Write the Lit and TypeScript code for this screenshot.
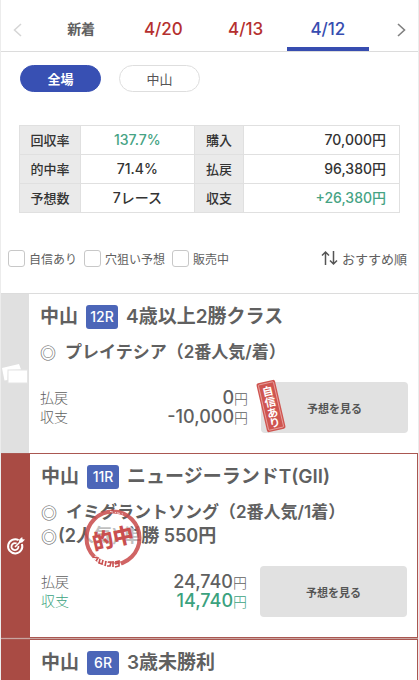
import { LitElement, html, css, svg, nothing } from "lit";
import { customElement, property, state } from "lit/decorators.js";
import { classMap } from "lit/directives/class-map.js";

interface Race {
  place: string;
  no: string;
  name: string;
  picks: string[];
  payout?: string;
  balance?: string;
  confident?: boolean;
  hit?: boolean;
}

const races: Race[] = [
  {
    place: "中山", no: "12R", name: "4歳以上2勝クラス",
    picks: ["プレイテシア（2番人気/着）"],
    payout: "0", balance: "-10,000", confident: true,
  },
  {
    place: "中山", no: "11R", name: "ニュージーランドT(GII)",
    picks: ["イミグラントソング（2番人気/1着）", "(2人気) 単勝 550円"],
    payout: "24,740", balance: "14,740", hit: true,
  },
  { place: "中山", no: "6R", name: "3歳未勝利", picks: [], hit: true },
];

const ticketsIcon = svg`
  <svg width="28" height="22" viewBox="0 0 28 22" aria-hidden="true">
    <path d="M1 5 L18 1 L20 6.5 L7 7 L6.5 17 L3.5 17.5 Z" fill="#fff"/>
    <rect x="7" y="7" width="19.500" height="13" fill="#fff" stroke="#e4e4e4" stroke-width="1"/>
  </svg>`;

const targetIcon = svg`
  <svg width="20" height="20" viewBox="0 0 20 20" fill="none" stroke="#fff" aria-hidden="true">
    <path d="M12.6 4.1 A7.1 7.1 0 1 0 15.9 8" stroke-width="2"/>
    <path d="M10.6 7.5 A3.5 3.5 0 1 0 12.4 10" stroke-width="1.8"/>
    <path d="M9 11 L15 5" stroke-width="1.6"/>
    <path d="M13 5.8 L13.2 3.6 L16.2 1 L16.6 3.2 L19 3.6 L16.2 6.6 L14 6.8 Z" fill="#fff" stroke="none"/>
  </svg>`;

const confidentStamp = svg`
  <svg class="confident" width="32" height="54" viewBox="0 0 32 54" role="img" aria-label="自信あり">
    <g transform="rotate(-13 16 27)">
      <rect x="6.500" y="2" width="19" height="50" rx="2" fill="#cf5550"/>
      <rect x="8.300" y="3.800" width="15.400" height="46.400" rx="1" fill="none" stroke="#eeb5b2" stroke-width=".7"/>
      <g class="vertical">
        <text x="16" y="16">自</text><text x="16" y="27">信</text>
        <text x="16" y="38">あ</text><text x="16" y="48">り</text>
      </g>
    </g>
  </svg>`;

const hitStamp = svg`
  <svg class="hit-stamp" width="60" height="60" viewBox="0 0 60 60" role="img" aria-label="的中">
    <ellipse cx="30" cy="30" rx="25" ry="16" fill="#fff" opacity=".6"/>
    <circle cx="30" cy="30" r="26.5" fill="none" stroke="#c94f4f" stroke-width="4" opacity=".88"/>
    <path d="M11 49 Q27 61 38 56" fill="none" stroke="#fff" stroke-width="4"/>
    <path d="M27 3.500 L40 6" fill="none" stroke="#fff" stroke-width=".8" stroke-dasharray="3 2 1 1"/>
    <path d="M10 49 l5 1 l-2 3 m4 -2 l-1 4 l3 1 l1 -4 m3 1 l-1 5 m3 -4 l3 0 l-1 4 l-3 0 m6 -5 l0 6 m2 -5 l4 -1 l0 5 l-4 1 m0 -3 l4 -1" fill="none" stroke="#c94f4f" stroke-width="1.600"/>
    <text class="brush" x="30" y="38" transform="rotate(-13 30 30)">的中</text>
  </svg>`;

@customElement("race-card")
class RaceCard extends LitElement {
  @property({ attribute: false }) race!: Race;

  static styles = css`
    :host { display: block; }
    * { box-sizing: border-box; }
    .card {
      display: grid;
      grid-template-columns: 28px 1fr;
      height: 100%;
      border-top: 1px solid #dcdcdc;
      color: #606060;
    }
    .card.hit { border: 1px solid #aa5751; border-left: 0; grid-template-columns: 29px 1fr; }
    .side { display: flex; align-items: center; justify-content: center; background: #e0e0e0; }
    .hit .side { background: #a94b44; }
    .body { padding: 9px 10px 20px 11px; min-width: 0; }
    h2 {
      display: flex; align-items: center; gap: 8px;
      margin: 0; height: 28px;
      font-size: 19px; font-weight: 600; line-height: 28px; white-space: nowrap;
    }
    .no {
      width: 32px; height: 24px; border-radius: 3px;
      background: #4c66b8; color: #fff;
      font-size: 14px; font-weight: 500; line-height: 24px; text-align: center;
    }
    .picks { position: relative; list-style: none; margin: 9px 0 18px; padding: 0; }
    .picks li { display: flex; font-size: 17px; font-weight: 600; line-height: 24px; white-space: nowrap; }
    .picks li + li { font-size: 18px; }
    .mark { width: 25px; font-family: "Noto Sans CJK JP", sans-serif; font-size: 16px; font-weight: 400; }
    .picks li + li .mark { width: 17px; }
    .hit-stamp { position: absolute; left: 42px; top: 8px; }
    .brush {
      font-family: "Noto Sans CJK JP", sans-serif;
      font-size: 21px; font-weight: 900; fill: #c94f4f; text-anchor: middle;
    }
    .foot { display: grid; grid-template-columns: 1fr 147px; gap: 13px; }
    dl {
      display: grid; grid-template-columns: auto 1fr; grid-auto-rows: 19px;
      align-content: start; margin: 0; padding-top: 6px;
      font-size: 14px; font-weight: 300; line-height: 19px;
    }
    dd { margin: 0; text-align: right; }
    .num { font-size: 18px; font-weight: 500; }
    .plus { color: #3ba27e; }
    .action { position: relative; }
    button {
      width: 100%; height: 51px; border: 0; border-radius: 4px;
      background: #e1e1e1; color: #555;
      font: 600 11px "Noto Sans CJK JP", sans-serif;
    }
    .confident { position: absolute; left: -6px; top: -3px; }
    .vertical {
      font: 700 11px "Noto Sans CJK JP", sans-serif;
      fill: #fff; text-anchor: middle;
    }
  `;

  render() {
    const r = this.race;
    const gain = classMap({ plus: !!r.hit });
    return html`
      <article class=${classMap({ card: true, hit: !!r.hit })}>
        <div class="side">${r.payout ? (r.hit ? targetIcon : ticketsIcon) : nothing}</div>
        <div class="body">
          <h2><span>${r.place}</span><span class="no">${r.no}</span><span>${r.name}</span></h2>
          ${r.payout
            ? html`
                <ul class="picks">
                  ${r.picks.map((p) => html`<li><span class="mark">◎</span><span>${p}</span></li>`)}
                  ${r.hit ? hitStamp : nothing}
                </ul>
                <div class="foot">
                  <dl>
                    <dt>払戻</dt><dd><span class="num">${r.payout}</span>円</dd>
                    <dt class=${gain}>収支</dt><dd class=${gain}><span class="num">${r.balance}</span>円</dd>
                  </dl>
                  <div class="action">
                    <button type="button">予想を見る</button>
                    ${r.confident ? confidentStamp : nothing}
                  </div>
                </div>`
            : nothing}
        </div>
      </article>`;
  }
}

@customElement("app-root")
class AppRoot extends LitElement {
  @state() private day = "4/12";
  @state() private course = "全場";

  static styles = css`
    * { box-sizing: border-box; }
    :host {
      display: flex; flex-direction: column; box-sizing: border-box;
      min-height: 100vh; overflow: hidden;
      border: solid #ececec; border-width: 0 1px;
      background: #fff; color: #606060;
      font-family: Inter, "Noto Sans CJK JP", sans-serif;
    }
    button { font-family: inherit; border: 0; background: none; padding: 0; }
    nav {
      display: grid; grid-template-columns: 39px repeat(4, 1fr) 49px;
      height: 52px; border-bottom: 1px solid #dcdcdc;
    }
    .arrow { display: flex; align-items: center; padding-top: 8px; }
    .arrow.prev { padding-left: 12px; }
    .arrow.next { padding-left: 28px; }
    .tab {
      padding-top: 11px; border-bottom: 4px solid transparent;
      font-size: 17px; font-weight: 500; line-height: 24px; color: #b5302f;
    }
    .tab.new { font-size: 14px; font-weight: 600; color: #606060; }
    .tab.on { color: #374db0; border-bottom-color: #374db0; }
    .courses { display: flex; gap: 18px; padding: 13px 19px 0; }
    .pill {
      width: 81px; height: 27px; border: 1px solid #dedede; border-radius: 14px;
      font-size: 13px; color: #555; background: #fff;
    }
    .pill.on { background: #3850b3; border-color: #3850b3; color: #fff; font-weight: 700; }
    table {
      margin: 33px 18px 0; border-collapse: collapse; table-layout: fixed;
      color: #333;
    }
    col.a { width: 16%; } col.b { width: 30%; } col.c { width: 13%; }
    th, td { height: 29px; padding: 0; border: 1px solid #e0e0e0; font-weight: 500; line-height: 20px; text-align: center; }
    th { background: #eaeaea; font-size: 13px; }
    td { font-size: 14px; }
    td.money { padding-right: 13px; text-align: right; }
    .plus { color: #46a384; }
    .filters {
      display: flex; align-items: flex-start; gap: 7px;
      height: 80px; padding: 31px 11px 0 7px;
    }
    label { display: flex; align-items: center; gap: 4px; height: 28px; font-size: 12px; white-space: nowrap; }
    input {
      appearance: none; width: 17px; height: 17px; margin: 0;
      border: 1px solid #c8c8c8; border-radius: 3px; background: #fff;
    }
    .sort {
      display: flex; align-items: center; gap: 4px; height: 28px;
      margin-left: auto; font-size: 13px; color: #606060; white-space: nowrap;
    }
    .gap { height: 1px; background: #c9a5a1; }
    .last { flex: 1; }
  `;

  render() {
    const days = ["新着", "4/20", "4/13", "4/12"];
    return html`
      <nav>
        <button class="arrow prev" aria-label="前へ">
          <svg width="9" height="14" viewBox="0 0 9 14" fill="none" stroke="#d5d5d5" stroke-width="1.5"><path d="M8 1 L1.5 7 L8 13"/></svg>
        </button>
        ${days.map((d) => html`
          <button class=${classMap({ tab: true, new: d === "新着", on: d === this.day })}
            @click=${() => (this.day = d)}>${d}</button>`)}
        <button class="arrow next" aria-label="次へ">
          <svg width="9" height="14" viewBox="0 0 9 14" fill="none" stroke="#808080" stroke-width="1.6"><path d="M1 1 L7.5 7 L1 13"/></svg>
        </button>
      </nav>
      <div class="courses">
        ${["全場", "中山"].map((c) => html`
          <button class=${classMap({ pill: true, on: c === this.course })}
            @click=${() => (this.course = c)}>${c}</button>`)}
      </div>
      <table>
        <colgroup><col class="a"><col class="b"><col class="c"><col></colgroup>
        <tbody>
          <tr><th scope="row">回収率</th><td class="plus">137.7%</td><th scope="row">購入</th><td class="money">70,000円</td></tr>
          <tr><th scope="row">的中率</th><td>71.4%</td><th scope="row">払戻</th><td class="money">96,380円</td></tr>
          <tr><th scope="row">予想数</th><td>7レース</td><th scope="row">収支</th><td class="money plus">+26,380円</td></tr>
        </tbody>
      </table>
      <div class="filters">
        ${["自信あり", "穴狙い予想", "販売中"].map((f) => html`<label><input type="checkbox">${f}</label>`)}
        <button class="sort">
          <svg width="17" height="16" viewBox="0 0 17 16" fill="none" stroke="#555" stroke-width="1.5" aria-hidden="true">
            <path d="M4.5 15 V2 M1 5.5 L4.5 2 L8 5.5 M12.5 1 V14 M9 10.5 L12.5 14 L16 10.5"/>
          </svg>おすすめ順
        </button>
      </div>
      <race-card .race=${races[0]}></race-card>
      <race-card .race=${races[1]}></race-card>
      <div class="gap"></div>
      <race-card class="last" .race=${races[2]}></race-card>
    `;
  }
}
